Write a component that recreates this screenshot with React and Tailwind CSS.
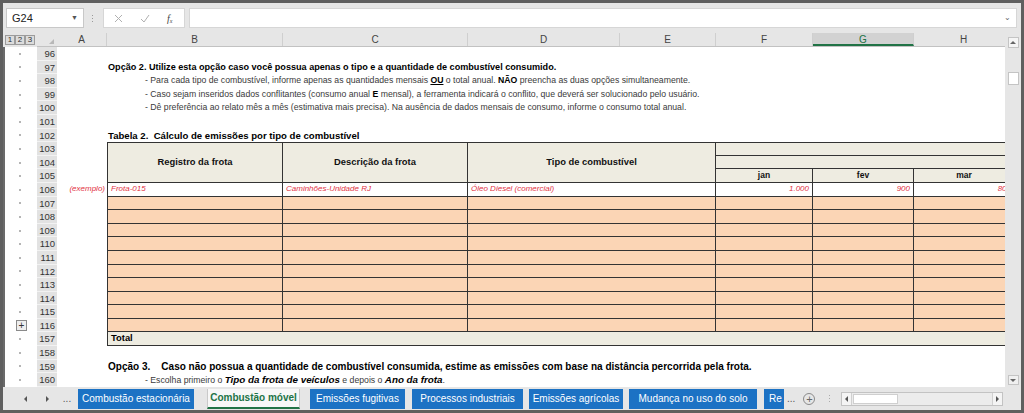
import React from "react"

const font = "font-['Liberation_Sans',Arial,sans-serif]"

const colHeads = [
  { l: "A", w: "w-[50px]" },
  { l: "B", w: "w-[176px]" },
  { l: "C", w: "w-[185px]" },
  { l: "D", w: "w-[152px]" },
  { l: "E", w: "w-[96px]" },
  { l: "F", w: "w-[97px]" },
  { l: "G", w: "w-[101px]", sel: true },
  { l: "H", w: "w-[100px]" },
]

const rowNums = [
  96, 97, 98, 99, 100, 101, 102, 103, 104, 105, 106, 107, 108, 109, 110, 111, 112, 113, 114, 115, 116, 157,
  158, 159, 160,
]

const tw = ["w-[176px]", "w-[185px]", "w-[248px]", "w-[97px]", "w-[101px]", "w-[100px]"]

const tabs = [
  { t: "Combustão estacionária", c: "ml-[1px] w-[116px]" },
  { t: "Combustão móvel", c: "ml-[13px] w-[93px]", active: true },
  { t: "Emissões fugitivas", c: "ml-[10px] w-[95px]" },
  { t: "Processos industriais", c: "ml-[7px] w-[111px]" },
  { t: "Emissões agrícolas", c: "ml-[6px] w-[94px]" },
  { t: "Mudança no uso do solo", c: "ml-[6px] w-[128px]" },
]

function FormulaBar() {
  return (
    <div className="h-[30px] flex items-start pt-[5px] bg-[#e6e6e6]">
      <div className="ml-[3px] w-[78px] h-[20px] bg-white border border-[#c8c8c8] flex items-center justify-between px-[5px]">
        <span className="text-[11px] text-[#222]">G24</span>
        <span className="text-[7px] text-[#555]">▼</span>
      </div>
      <div className="ml-[7px] w-[2px] h-[20px] flex flex-col items-center justify-center gap-[2px]">
        <span className="w-[1px] h-[1px] bg-[#999]" />
        <span className="w-[1px] h-[1px] bg-[#999]" />
        <span className="w-[1px] h-[1px] bg-[#999]" />
      </div>
      <div className="ml-[10px] w-[82px] h-[20px] bg-white border border-[#d6d6d6] flex items-center text-[#aaa]">
        <svg className="ml-[10px]" width="9" height="9" viewBox="0 0 9 9">
          <path d="M1 1 L8 8 M8 1 L1 8" stroke="#b0b0b0" strokeWidth="1" />
        </svg>
        <svg className="ml-[17px]" width="10" height="9" viewBox="0 0 10 9">
          <path d="M1 5 L4 8 L9 1" stroke="#b0b0b0" strokeWidth="1" fill="none" />
        </svg>
        <span className="ml-[17px] italic text-[10px] text-[#444] font-['Liberation_Serif',serif]">
          f<sub className="text-[6px]">x</sub>
        </span>
      </div>
      <div className="ml-[4px] flex-1 mr-[4px] h-[20px] bg-white border border-[#d6d6d6] flex items-center justify-end pr-[5px]">
        <span className="text-[8px] text-[#666]">⌄</span>
      </div>
    </div>
  )
}

function TextRow({ pl = "pl-[51px]", children, className = "" }) {
  return (
    <div className={`h-[13.6px] whitespace-nowrap leading-[13.6px] ${pl} ${className}`}>{children}</div>
  )
}

function TableHeader() {
  const c = "border-[#333] bg-[#eeece1]"
  return (
    <div className="flex h-[40.8px]">
      <div className="w-[50px]" />
      <div className="grid grid-cols-[176px_185px_248px_97px_101px_100px] grid-rows-[13.6px_13.6px_13.6px] text-[9.4px] font-bold text-[#111]">
        <div className={`row-span-3 border-l border-t border-r border-b ${c} flex items-center justify-center`}>
          Registro da frota
        </div>
        <div className={`row-span-3 border-t border-r border-b ${c} flex items-center justify-center`}>
          Descrição da frota
        </div>
        <div className={`row-span-3 border-t border-r border-b ${c} flex items-center justify-center`}>
          Tipo de combustível
        </div>
        <div className={`col-span-3 border-t border-b ${c}`} />
        <div className={`col-span-3 border-b ${c}`} />
        <div className={`border-r border-b ${c} flex items-center justify-center text-[8.5px]`}>jan</div>
        <div className={`border-r border-b ${c} flex items-center justify-center text-[8.5px]`}>fev</div>
        <div className={`border-b ${c} flex items-center justify-center text-[8.5px]`}>mar</div>
      </div>
    </div>
  )
}

function ExampleRow() {
  const vals = ["Frota-015", "Caminhões-Unidade RJ", "Óleo Diesel (comercial)", "1.000", "900", "800"]
  return (
    <div className="flex h-[13.6px] italic text-[8px] text-[#e2323f] leading-[12.6px]">
      <div className="w-[50px] text-right pr-[2px]">(exemplo)</div>
      {vals.map((v, i) => (
        <div
          key={i}
          className={`${tw[i]} bg-white border-b border-[#333] ${i === 0 ? "border-l" : ""} ${
            i < 5 ? "border-r" : ""
          } ${i >= 3 ? "text-right pr-[3px]" : "pl-[3px]"} ${i === 5 ? "pr-[0px]" : ""}`}
        >
          {v}
        </div>
      ))}
    </div>
  )
}

function PeachRow() {
  return (
    <div className="flex h-[13.6px]">
      <div className="w-[50px]" />
      {tw.map((w, i) => (
        <div
          key={i}
          className={`${w} bg-[#fbd5b5] border-b border-[#333] ${i === 0 ? "border-l" : ""} ${i < 5 ? "border-r" : ""}`}
        />
      ))}
    </div>
  )
}

function Sheet() {
  const bullet = "text-[8.7px] text-[#3a3a3a]"
  return (
    <div className={`flex-1 overflow-hidden bg-white`}>
      <div className="flex h-[14px] bg-[#e6e6e6] border-b border-[#c2c2c2]">
        {colHeads.map((c) => (
          <div
            key={c.l}
            className={`${c.w} shrink-0 text-center text-[10px] leading-[13px] border-r border-[#cfcfcf] ${
              c.sel ? "bg-[#d2d2d2] text-[#217346] border-b-2 border-b-[#217346]" : "text-[#444]"
            }`}
          >
            {c.l}
          </div>
        ))}
      </div>
      <div className="w-[958px] text-black">
        <TextRow />
        <TextRow className="text-[9.1px] font-bold">
          Opção 2. Utilize esta opção caso você possua apenas o tipo e a quantidade de combustível consumido.
        </TextRow>
        <TextRow pl="pl-[88px]" className={bullet}>
          - Para cada tipo de combustível, informe apenas as quantidades mensais{" "}
          <b className="underline text-black">OU</b> o total anual. <b className="text-black">NÃO</b> preencha as
          duas opções simultaneamente.
        </TextRow>
        <TextRow pl="pl-[88px]" className={bullet}>
          - Caso sejam inseridos dados conflitantes (consumo anual <b className="text-black">E</b> mensal), a
          ferramenta indicará o conflito, que deverá ser solucionado pelo usuário.
        </TextRow>
        <TextRow pl="pl-[88px]" className={bullet}>
          - Dê preferência ao relato mês a mês (estimativa mais precisa). Na ausência de dados mensais de consumo,
          informe o consumo total anual.
        </TextRow>
        <TextRow />
        <TextRow className="text-[9.6px] font-bold">Tabela 2.&nbsp; Cálculo de emissões por tipo de combustível</TextRow>
        <TableHeader />
        <ExampleRow />
        {Array.from({ length: 10 }).map((_, i) => (
          <PeachRow key={i} />
        ))}
        <div className="flex h-[13.6px]">
          <div className="w-[50px]" />
          <div className="w-[907px] bg-[#eeece1] border-l border-b border-[#333] text-[9.4px] font-bold pl-[3px] leading-[12.6px]">
            Total
          </div>
        </div>
        <TextRow />
        <TextRow className="text-[10px] font-bold">
          Opção 3.&nbsp;&nbsp;&nbsp; Caso não possua a quantidade de combustível consumida, estime as emissões com
          base na distância percorrida pela frota.
        </TextRow>
        <TextRow pl="pl-[88px]" className={bullet}>
          - Escolha primeiro o <b className="italic text-[9.8px] text-black">Tipo da frota de veículos</b> e depois
          o <b className="italic text-[9.8px] text-black">Ano da frota</b>.
        </TextRow>
      </div>
    </div>
  )
}

function Outline() {
  return (
    <div className="w-[34px] shrink-0 flex flex-col">
      <div className="h-[14px] bg-[#e6e6e6] flex items-center pl-[2px]">
        {["1", "2", "3"].map((n) => (
          <div
            key={n}
            className="w-[10px] h-[10px] border border-[#9c9c9c] bg-[#dcdcdc] text-[8px] leading-[8px] text-center text-[#333]"
          >
            {n}
          </div>
        ))}
      </div>
      <div className="flex-1 bg-white border-l-2 border-[#6a6a6a]">
        {rowNums.map((n) => (
          <div key={n} className="h-[13.6px] flex items-center pl-[11px]">
            {n === 116 ? (
              <div className="w-[11px] h-[11px] border border-[#8a8a8a] bg-[#eee] text-[10px] leading-[9px] text-center text-[#333]">
                +
              </div>
            ) : (
              <span className="ml-[3px] w-[2px] h-[2px] bg-[#b5b5b5]" />
            )}
          </div>
        ))}
      </div>
    </div>
  )
}

function RowHeads() {
  return (
    <div className="w-[20px] shrink-0 flex flex-col">
      <div className="h-[14px] bg-[#e6e6e6] border-b border-[#c2c2c2] relative">
        <span className="absolute right-[3px] bottom-[2px] w-0 h-0 border-l-[5px] border-l-transparent border-b-[5px] border-b-[#b8b8b8]" />
      </div>
      <div className="flex-1 bg-white">
        {rowNums.map((n) => (
          <div
            key={n}
            className="h-[13.6px] bg-[#e2e2e2] border-b border-[#f2f2f2] text-right pr-[2px] text-[9.5px] leading-[13px] text-[#333]"
          >
            {n}
          </div>
        ))}
      </div>
    </div>
  )
}

function VScroll() {
  return (
    <div className="w-[16px] shrink-0 bg-[#e6e6e6] flex flex-col items-center">
      <div className="mt-[4px] w-[11px] h-[11px] bg-[#f5f5f5] border border-[#c4c4c4] flex items-center justify-center">
        <span className="w-0 h-0 border-l-[3px] border-r-[3px] border-b-[3px] border-l-transparent border-r-transparent border-b-[#666]" />
      </div>
      <div className="mt-[24px] w-[11px] h-[13px] bg-white border border-[#c4c4c4]" />
      <div className="flex-1" />
      <div className="mb-[2px] w-[11px] h-[10px] bg-[#f0f0f0] border border-[#c4c4c4] flex items-center justify-center">
        <span className="w-0 h-0 border-l-[3px] border-r-[3px] border-t-[3px] border-l-transparent border-r-transparent border-t-[#666]" />
      </div>
    </div>
  )
}

function TabBar() {
  return (
    <div className="h-[23px] bg-[#e6e6e6] flex items-center pl-[12px] text-[10px]">
      <div className="w-[20px] flex justify-center">
        <span className="w-0 h-0 border-t-[3px] border-b-[3px] border-r-[3px] border-t-transparent border-b-transparent border-r-[#555]" />
      </div>
      <div className="ml-[2px] w-[20px] flex justify-center">
        <span className="w-0 h-0 border-t-[3px] border-b-[3px] border-l-[3px] border-t-transparent border-b-transparent border-l-[#555]" />
      </div>
      <div className="w-[20px] text-center text-[#555] leading-[10px]">...</div>
      {tabs.map((t) =>
        t.active ? (
          <div
            key={t.t}
            className={`${t.c} h-[20px] bg-[#f7f7f7] border-x border-[#c9c9c9] border-b-2 border-b-[#217346] text-[#217346] font-bold flex items-center justify-center`}
          >
            {t.t}
          </div>
        ) : (
          <div key={t.t} className={`${t.c} h-[20px] bg-[#1c72c4] text-white flex items-center justify-center`}>
            {t.t}
          </div>
        ),
      )}
      <div className="ml-[7px] w-[20px] h-[20px] bg-[#1c72c4] text-white overflow-hidden pl-[5px] leading-[20px]">Re</div>
      <div className="ml-[3px] text-[#555] leading-[10px]">...</div>
      <div className="ml-[8px] w-[12px] h-[12px] rounded-full border border-[#8a8a8a] flex items-center justify-center text-[#666] text-[11px] leading-[10px]">
        +
      </div>
      <div className="ml-[14px] h-[14px] flex flex-col justify-center gap-[2px]">
        <span className="w-[1px] h-[1px] bg-[#aaa]" />
        <span className="w-[1px] h-[1px] bg-[#aaa]" />
        <span className="w-[1px] h-[1px] bg-[#aaa]" />
      </div>
      <div className="ml-[11px] w-[162px] h-[14px] border border-[#c3c3c3] bg-[#ececec] flex items-center">
        <div className="w-[10px] h-full bg-[#f4f4f4] border-r border-[#d0d0d0] flex items-center justify-center">
          <span className="w-0 h-0 border-t-[3px] border-b-[3px] border-r-[3px] border-t-transparent border-b-transparent border-r-[#555]" />
        </div>
        <div className="ml-[1px] w-[45px] h-[10px] bg-white border border-[#cfcfcf]" />
        <div className="flex-1" />
        <div className="w-[10px] h-full bg-[#f4f4f4] border-l border-[#d0d0d0] flex items-center justify-center">
          <span className="w-0 h-0 border-t-[3px] border-b-[3px] border-l-[3px] border-t-transparent border-b-transparent border-l-[#555]" />
        </div>
      </div>
    </div>
  )
}

export default function App() {
  return (
    <div className={`w-[1024px] h-[413px] bg-[#5f5f5f] p-[3px] ${font}`}>
      <div className="w-full h-full flex flex-col bg-[#e6e6e6]">
        <FormulaBar />
        <div className="h-[354px] flex">
          <Outline />
          <RowHeads />
          <Sheet />
          <VScroll />
        </div>
        <TabBar />
      </div>
    </div>
  )
}
